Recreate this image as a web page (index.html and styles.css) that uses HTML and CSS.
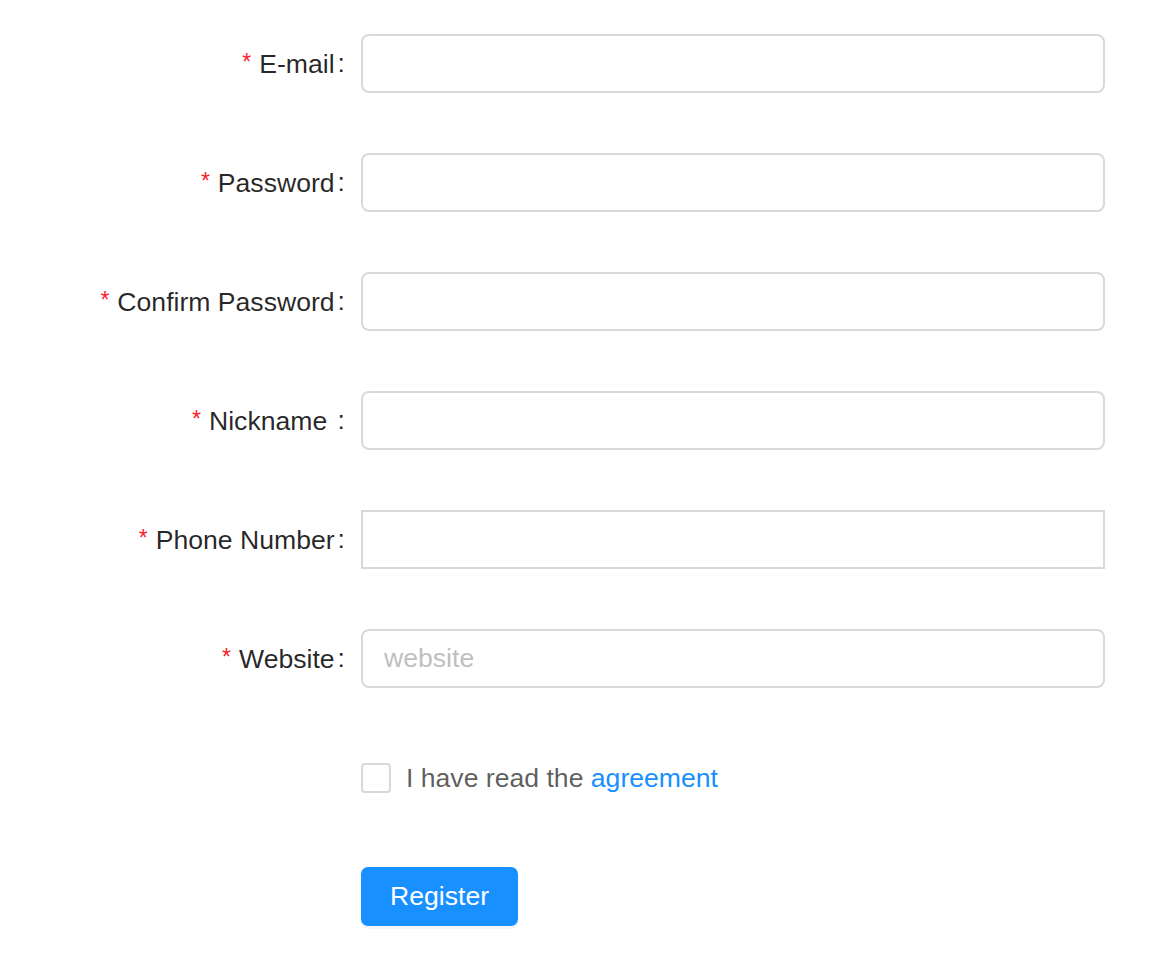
FILE: index.html
```html
<!DOCTYPE html>
<html>
<head>
<meta charset="utf-8">
<link rel="stylesheet" href="styles.css">
</head>
<body>
<form class="form">
  <div class="row">
    <label class="label required">E-mail<span class="colon">:</span></label>
    <div class="control"><input class="input" type="text"></div>
  </div>
  <div class="row">
    <label class="label required">Password<span class="colon">:</span></label>
    <div class="control"><input class="input" type="password"></div>
  </div>
  <div class="row">
    <label class="label required">Confirm Password<span class="colon">:</span></label>
    <div class="control"><input class="input" type="password"></div>
  </div>
  <div class="row">
    <label class="label required">Nickname&nbsp;<span class="colon">:</span></label>
    <div class="control"><input class="input" type="text"></div>
  </div>
  <div class="row">
    <label class="label required">Phone Number<span class="colon">:</span></label>
    <div class="control"><input class="input square" type="text"></div>
  </div>
  <div class="row">
    <label class="label required">Website<span class="colon">:</span></label>
    <div class="control"><input class="input" type="text" placeholder="website"></div>
  </div>
  <div class="row">
    <div></div>
    <div class="control">
      <label class="check"><span class="box"></span><span class="check-text">I have read the <a class="link" href="#">agreement</a></span></label>
    </div>
  </div>
  <div class="row">
    <div></div>
    <div class="control"><button class="btn" type="button">Register</button></div>
  </div>
</form>
</body>
</html>
```
FILE: styles.css
```css
html, body {
  margin: 0;
  padding: 0;
  background: #ffffff;
}
body {
  font-family: "Liberation Sans", Arial, sans-serif;
  font-size: 26.6px;
  color: rgba(0, 0, 0, 0.65);
}
.form {
  padding-top: 27px;
  width: 1105px;
}
.row {
  display: grid;
  grid-template-columns: 361px 744px;
  height: 73px;
  margin-bottom: 46px;
  align-items: center;
}
.label {
  display: flex;
  justify-content: flex-end;
  align-items: center;
  color: rgba(0, 0, 0, 0.85);
  white-space: nowrap;
  line-height: 1.2;
  position: relative;
  top: 1px;
}
.required::before {
  content: "*";
  color: #f5222d;
  font-size: 23px;
  margin-right: 8px;
  position: relative;
  top: -2px;
}
.colon {
  margin: 0 16px 0 3px;
  position: relative;
  top: -1px;
}
.control {
  display: flex;
  align-items: center;
}
.input {
  box-sizing: border-box;
  width: 744px;
  height: 59px;
  border: 2px solid #d9d9d9;
  border-radius: 8px;
  padding: 0 21px;
  font-family: "Liberation Sans", Arial, sans-serif;
  font-size: 26.6px;
  color: rgba(0, 0, 0, 0.65);
  background: #fff;
  outline: none;
  margin: 0;
}
.input.square {
  border-radius: 0;
}
.input::placeholder {
  color: #bfbfbf;
}
.check {
  display: flex;
  align-items: center;
}
.box {
  box-sizing: border-box;
  width: 30px;
  height: 30px;
  border: 2px solid #d9d9d9;
  border-radius: 4px;
  background: #fff;
}
.check-text {
  margin-left: 15px;
  color: rgba(0, 0, 0, 0.65);
  position: relative;
  top: 1px;
}
.link {
  color: #1890ff;
  text-decoration: none;
}
.btn {
  height: 59px;
  padding: 0 27px;
  background: #1890ff;
  color: #fff;
  border: 2px solid #1890ff;
  border-radius: 7px;
  font-family: "Liberation Sans", Arial, sans-serif;
  font-size: 26.6px;
  box-shadow: 0 3px 0 rgba(0, 0, 0, 0.035);
  cursor: pointer;
}
```
